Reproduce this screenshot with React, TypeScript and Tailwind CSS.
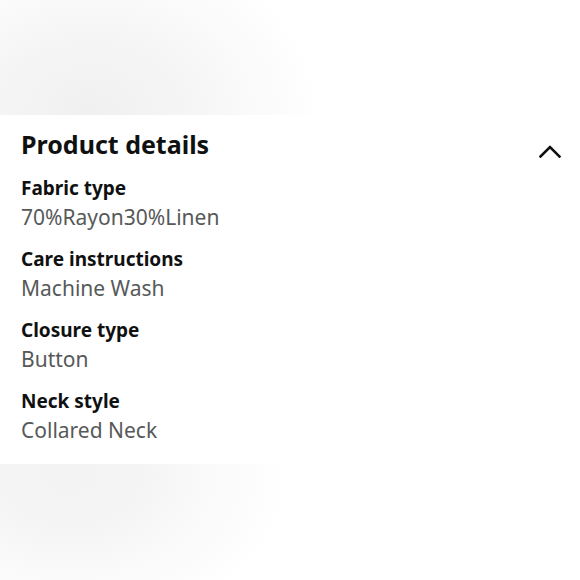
import React from 'react';

const details = [
  { label: 'Fabric type', value: '70%Rayon30%Linen' },
  { label: 'Care instructions', value: 'Machine Wash' },
  { label: 'Closure type', value: 'Button' },
  { label: 'Neck style', value: 'Collared Neck' },
];

export default function App() {
  return (
    <div className="w-[580px] h-[580px] bg-white overflow-hidden flex flex-col" style={{ fontFamily: '"Noto Sans", Arial, sans-serif' }}>
      {/* blurred image strip above */}
      <div className="h-[115px] shrink-0 bg-[radial-gradient(ellipse_230px_170px_at_90px_110px,#f0f0f0_0%,#f4f4f4_35%,#f9f9f9_65%,#ffffff_100%)]" />

      <section className="bg-white pl-[21px] pr-[19px] pt-[14px] pb-[19px]">
        <div className="flex items-start justify-between h-[30px]">
          <h2 className="text-[25px] leading-[30px] font-bold text-[#0f1111]">Product details</h2>
          <svg width="22" height="13" viewBox="0 0 22 13" fill="none" className="mt-[16px]">
            <path d="M1.5 11.5L11 2L20.5 11.5" stroke="#0f1111" strokeWidth="2.6" strokeLinecap="square" />
          </svg>
        </div>
        <div className="mt-[15px] flex flex-col gap-[13px]">
          {details.map((d) => (
            <div key={d.label}>
              <div className="text-[19px] leading-[29px] font-bold text-[#0f1111]">{d.label}</div>
              <div className="text-[21px] leading-[29px] text-[#565959]">{d.value}</div>
            </div>
          ))}
        </div>
      </section>

      {/* blurred image strip below */}
      <div className="flex-1 bg-[radial-gradient(ellipse_220px_160px_at_70px_10px,#f2f2f2_0%,#f5f5f5_35%,#fafafa_65%,#ffffff_100%)]" />
    </div>
  );
}
